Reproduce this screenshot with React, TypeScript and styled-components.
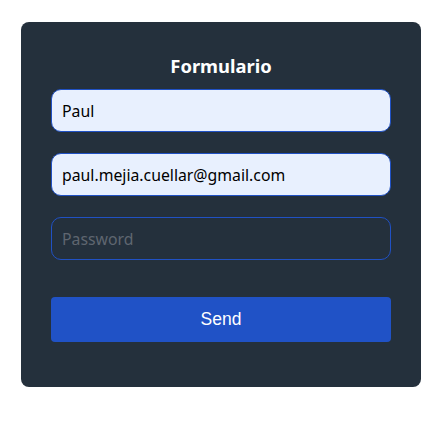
import { createGlobalStyle, styled } from "styled-components";

const GlobalStyle = createGlobalStyle`
  body {
    margin: 0;
    background: #ffffff;
    font-family: "Noto Sans", "Open Sans", sans-serif;
  }
`;

export default function App() {
  return (
    <Page>
      <GlobalStyle />
      <Card onSubmit={(e) => e.preventDefault()}>
        <Title>Formulario</Title>
        <Field $filled type="text" defaultValue="Paul" />
        <Field $filled type="email" defaultValue="paul.mejia.cuellar@gmail.com" />
        <Field type="password" placeholder="Password" />
        <SendButton type="submit">Send</SendButton>
      </Card>
    </Page>
  );
}

const Page = styled.div`
  padding: 22px 0 0 21px;
`;

const Card = styled.form`
  width: 400px;
  height: 365px;
  box-sizing: border-box;
  padding: 24px 30px 0;
  background: #24303c;
  border-radius: 8px;
  display: flex;
  flex-direction: column;
  gap: 21px;
`;

const Title = styled.h2`
  margin: 9px 0 -9px;
  text-align: center;
  color: #ffffff;
  font-size: 18.4px;
  font-weight: 700;
  line-height: 22px;
`;

const Field = styled.input<{ $filled?: boolean }>`
  height: 43px;
  box-sizing: border-box;
  padding: 0 10px;
  border: 1px solid #2051c4;
  border-radius: 10px;
  background: ${(p) => (p.$filled ? "#e8f0fe" : "transparent")};
  color: #000000;
  font-family: "Noto Sans", "Open Sans", sans-serif;
  font-size: 15.8px;
  outline: none;

  &::placeholder {
    color: #5f6670;
  }
`;

const SendButton = styled.button`
  margin-top: 16px;
  height: 45px;
  border: none;
  border-radius: 4px;
  background: #2052c6;
  color: #ffffff;
  font-family: "Liberation Sans", Arial, sans-serif;
  font-size: 17.5px;
  cursor: pointer;
`;
